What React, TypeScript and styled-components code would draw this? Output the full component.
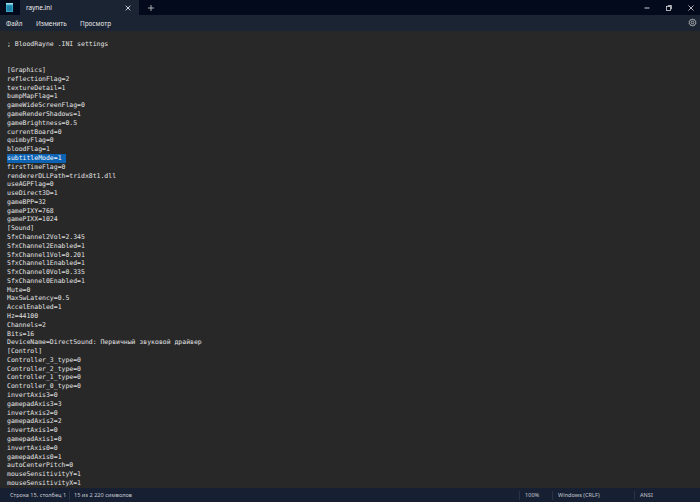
import React from "react";
import styled, { createGlobalStyle } from "styled-components";

const Global = createGlobalStyle`
  html, body { margin: 0; padding: 0; background: #282828; overflow: hidden; }
  #root { width: 700px; height: 502px; }
`;
const Win = styled.div`
  width: 700px; height: 502px; display: flex; flex-direction: column;
  font-family: "Noto Sans", "Liberation Sans", sans-serif; color: #e6e6e6;
`;
const TitleBar = styled.div`
  height: 15px; background: #020a1b; display: flex; align-items: stretch; flex: none;
`;
const AppIcon = styled.div`
  width: 20px; padding-right: 2px; box-sizing: border-box; display: flex; align-items: center; justify-content: center; flex: none;
`;
const Tab = styled.div`
  width: 119px; background: #1b2433; display: flex; align-items: center; justify-content: space-between;
  padding: 0 8px 0 6px; box-sizing: border-box; font-size: 6.4px; color: #f0f0f0;
`;
const PlusButton = styled.div`
  width: 24px; display: flex; align-items: center; justify-content: center;
`;
const Spacer = styled.div`flex: 1;`;
const WinButtons = styled.div`
  display: grid; grid-template-columns: 22px 22px 20px; align-items: center; justify-items: center;
`;
const WinButton = styled.div`
  display: flex; align-items: center; justify-content: center;
  &:last-child { padding-left: 2px; }
`;
const MenuBar = styled.div`
  height: 16px; background: #1b2433; display: flex; align-items: center; flex: none;
  padding: 0 3px 0 6px; box-sizing: border-box; font-size: 6.4px; color: #e6e6e6;
`;
const MenuItem = styled.span<{ $w: number }>`
  width: ${p => p.$w}px;
`;
const GearIcon = styled.svg`
  width: 9px; height: 9px; margin-bottom: 1px;
`;
const Editor = styled.div`
  flex: 1; min-height: 0; overflow: hidden; background: #282828; padding: 0 0 0 7px;
  font-family: "DejaVu Sans Mono", monospace; font-size: 6.48px; line-height: 8.79px; color: #e2e2e2;
`;
const Line = styled.div`
  height: 8.79px; white-space: pre;
`;
const Selected = styled.span`
  background: #0c63b4; color: #f4f8fc; display: inline-block; height: 8.79px; padding-right: 4px;
`;
const StatusBar = styled.div`
  height: 14px; background: #172033; display: flex; align-items: center; flex: none;
  padding-top: 1px; box-sizing: border-box; font-size: 5.6px; color: #c4c8d0;
`;
const StatusCell = styled.div<{ $w: number; $pad: number; $rule?: boolean }>`
  width: ${p => p.$w}px; padding-left: ${p => p.$pad}px; box-sizing: border-box; white-space: nowrap;
  ${p => p.$rule ? "border-left: 1px solid #2a3344;" : ""}
  height: 9px; line-height: 9px;
`;

const lines = `
; BloodRayne .INI settings


[Graphics]
reflectionFlag=2
textureDetail=1
bumpMapFlag=1
gameWideScreenFlag=0
gameRenderShadows=1
gameBrightness=0.5
currentBoard=0
quimbyFlag=0
bloodFlag=1
subtitleMode=1
firstTimeFlag=0
rendererDLLPath=tridx8t1.dll
useAGPFlag=0
useDirect3D=1
gameBPP=32
gamePIXY=768
gamePIXX=1024
[Sound]
SfxChannel2Vol=2.345
SfxChannel2Enabled=1
SfxChannel1Vol=0.201
SfxChannel1Enabled=1
SfxChannel0Vol=0.335
SfxChannel0Enabled=1
Mute=0
MaxSwLatency=0.5
AccelEnabled=1
Hz=44100
Channels=2
Bits=16
DeviceName=DirectSound: Первичный звуковой драйвер
[Control]
Controller_3_type=0
Controller_2_type=0
Controller_1_type=0
Controller_0_type=0
invertAxis3=0
gamepadAxis3=3
invertAxis2=0
gamepadAxis2=2
invertAxis1=0
gamepadAxis1=0
invertAxis0=0
gamepadAxis0=1
autoCenterPitch=0
mouseSensitivityY=1
mouseSensitivityX=1`.split("\n");

export default function App() {
  return (
    <Win>
      <Global />
      <TitleBar>
        <AppIcon>
          <svg width="7" height="9" viewBox="0 0 7 9">
            <rect x="0" y="0" width="7" height="9" fill="#3aa6c8" />
            <rect x="0" y="0" width="7" height="1.5" fill="#9adbe8" />
            <rect x="1" y="2.5" width="5" height="5.5" fill="#1f7fa8" />
          </svg>
        </AppIcon>
        <Tab>
          <span>rayne.ini</span>
          <svg width="6" height="6" viewBox="0 0 6 6" stroke="#e6e6e6" strokeWidth="0.9"><path d="M0.7 0.7 5.3 5.3M5.3 0.7 0.7 5.3" /></svg>
        </Tab>
        <PlusButton>
          <svg width="6" height="6" viewBox="0 0 6 6" stroke="#d0d0d0" strokeWidth="0.8"><path d="M3 0V6M0 3H6" /></svg>
        </PlusButton>
        <Spacer />
        <WinButtons>
          <WinButton>
            <svg width="6" height="6" viewBox="0 0 6 6" stroke="#d0d0d0" strokeWidth="1"><path d="M0.5 3H5.500" /></svg>
          </WinButton>
          <WinButton>
            <svg width="6" height="6" viewBox="0 0 6 6" stroke="#d8d8d8" strokeWidth="0.8" fill="none"><rect x="0.5" y="1.5" width="4" height="4" /><path d="M1.800 0.5H5.500V4.200" /></svg>
          </WinButton>
          <WinButton>
            <svg width="6" height="6" viewBox="0 0 6 6" stroke="#e0e0e0" strokeWidth="0.8"><path d="M0.5 0.5 5.500 5.500M5.500 0.5 0.5 5.500" /></svg>
          </WinButton>
        </WinButtons>
      </TitleBar>
      <MenuBar>
        <MenuItem $w={30}>Файл</MenuItem>
        <MenuItem $w={44}>Изменить</MenuItem>
        <MenuItem $w={40}>Просмотр</MenuItem>
        <Spacer />
        <GearIcon viewBox="0 0 24 24" fill="none" stroke="#cfcfcf" strokeWidth="2"><circle cx="12" cy="12" r="3.5" /><path d="M12 2l2 3 3.5-.6 1 3.4 3 1.700-1.300 2.500 1.300 2.500-3 1.700-1 3.400-3.500-.6-2 3-2-3-3.500.6-1-3.400-3-1.700L3.800 12 2.500 9.500l3-1.700 1-3.400L10 5z" /></GearIcon>
      </MenuBar>
      <Editor>
        {lines.map((l, i) => (
          <Line key={i}>{l === "subtitleMode=1" ? <Selected>{l}</Selected> : l}</Line>
        ))}
      </Editor>
      <StatusBar>
        <StatusCell $w={69} $pad={10}>Строка 15, столбец 1</StatusCell>
        <StatusCell $w={450} $pad={4} $rule>15 из 2 220 символов</StatusCell>
        <StatusCell $w={33} $pad={5} $rule>100%</StatusCell>
        <StatusCell $w={82} $pad={5} $rule>Windows (CRLF)</StatusCell>
        <StatusCell $w={66} $pad={5} $rule>ANSI</StatusCell>
      </StatusBar>
    </Win>
  );
}
